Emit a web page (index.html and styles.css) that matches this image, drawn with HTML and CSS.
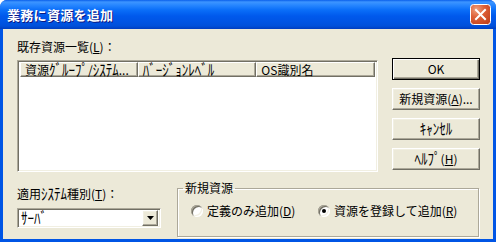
FILE: index.html
```html
<!DOCTYPE html>
<html lang="ja">
<head>
	<meta charset="UTF-8">
	<title>業務に資源を追加</title>
	<link rel="stylesheet" href="styles.css">
</head>
<body>
	<div class="window">
		<div class="titlebar">
			<span class="title">業務に資源を追加</span>
			<span class="close">
				<svg width="21" height="21" viewBox="0 0 21 21">
					<defs>
						<radialGradient id="closeFill" cx="0.3" cy="0.25" r="0.9">
							<stop offset="0" stop-color="#F0A07E"/>
							<stop offset="0.45" stop-color="#DD5F36"/>
							<stop offset="1" stop-color="#C1401C"/>
						</radialGradient>
					</defs>
					<rect x="0.5" y="0.5" width="20" height="20" rx="3" fill="url(#closeFill)" stroke="#fff"/>
					<path d="M6 6 L15 15 M15 6 L6 15" stroke="#fff" stroke-width="2" stroke-linecap="square"/>
				</svg>
			</span>
		</div>
		<div class="content">
			<div class="top">
				<div class="left">
					<div class="label">既存資源一覧(<u>L</u>)：</div>
					<div class="listview sunken">
						<div class="header">
							<div class="col">資源<span class="hw">ｸﾞﾙｰﾌﾟ</span>/<span class="hw">ｼｽﾃﾑ</span>...</div>
							<div class="col"><span class="hw">ﾊﾞｰｼﾞｮﾝﾚﾍﾞﾙ</span></div>
							<div class="col">OS識別名</div>
						</div>
					</div>
				</div>
				<div class="buttons">
					<div class="btn default">OK</div>
					<div class="btn raised">新規資源(<u>A</u>)...</div>
					<div class="btn raised"><span class="hw">ｷｬﾝｾﾙ</span></div>
					<div class="btn raised"><span class="hw">ﾍﾙﾌﾟ</span>(<u>H</u>)</div>
				</div>
			</div>
			<div class="bottom">
				<div class="systype">
					<div class="label">適用<span class="hw">ｼｽﾃﾑ</span>種別(<u>T</u>)：</div>
					<div class="combo sunken">
						<span class="value"><span class="hw">ｻｰﾊﾞ</span></span>
						<span class="drop raised">
							<svg width="7" height="4" viewBox="0 0 7 4"><polygon points="0,0 7,0 3.5,4" fill="#000"/></svg>
						</span>
					</div>
				</div>
				<fieldset class="group">
					<legend>新規資源</legend>
					<div class="radios">
						<div class="option first"><span class="radio"></span>定義のみ追加(<u>D</u>)</div>
						<div class="option"><span class="radio checked"></span>資源を登録して追加(<u>R</u>)</div>
					</div>
				</fieldset>
			</div>
		</div>
	</div>
</body>
</html>
```
FILE: styles.css
```css
body { margin: 0; background: #fff; font: 12px/14px "Noto Sans CJK JP", sans-serif; color: #000; }
u { text-decoration: underline; text-underline-offset: 1px; }
.hw { display: inline-block; font-size: 13px; line-height: 12px; transform: scaleY(1.2); }

.window { width: 496px; height: 242px; background: #0055E5; border-radius: 7px 7px 0 0; display: flex; flex-direction: column; overflow: hidden; }
.titlebar { height: 29px; flex: none; display: flex; align-items: center; justify-content: space-between; padding: 0 5px 0 7px;
	background: linear-gradient(#0A5FEA 0, #3D95FF 2px, #2887FF 5px, #0A6EF8 10px, #0059EC 16px, #0054E3 22px, #0050DA 26px, #003DBF 29px); }
.title { color: #fff; font-weight: bold; font-size: 13px; text-shadow: 1px 1px #0A1883; letter-spacing: 0.3px; }
.close { display: flex; }

.content { flex: 1; margin: 0 3px 3px; background: #ECE9D8; padding: 11px 13px 0 14px; display: flex; flex-direction: column; }

.sunken { border: 1px solid; border-color: #ACA899 #fff #fff #ACA899; box-shadow: inset 1px 1px #716F64, inset -1px -1px #F1EFE2; box-sizing: border-box; }
.raised { border: 1px solid; border-color: #fff #716F64 #716F64 #fff; box-shadow: inset -1px -1px #ACA899, inset 1px 1px #F1EFE2; box-sizing: border-box; }

.top { display: flex; gap: 14px; }
.label { height: 14px; }
.listview { width: 361px; height: 112px; margin-top: 6px; background: #fff; padding: 1px 2px 2px 2px; }
.header { display: flex; height: 15px; }
.col { width: 119px; height: 15px; box-sizing: border-box; padding-left: 4px; line-height: 13px; white-space: nowrap;
	border: 1px solid; border-color: #fff #716F64 #716F64 #fff; box-shadow: inset -1px -1px #ACA899; background: #ECE9D8; }
.col:first-child { width: 118px; }

.buttons { display: flex; flex-direction: column; gap: 8px; margin-top: 18px; }
.btn { width: 88px; height: 22px; display: flex; align-items: center; justify-content: center; background: #ECE9D8; }
.btn.default { border: 1px solid #000; box-sizing: border-box; box-shadow: inset 1px 1px #fff, inset -1px -1px #716F64, inset -2px -2px #ACA899; }

.bottom { display: flex; margin-top: 9px; }
.systype { padding-top: 6px; }
.combo { width: 144px; height: 20px; margin-top: 7px; background: #fff; display: flex; align-items: center; padding: 2px; }
.combo .value { padding-left: 1px; flex: 1; }
.drop { width: 16px; height: 16px; background: #ECE9D8; display: flex; align-items: center; justify-content: center; }

.group { margin: 0 0 0 16px; padding: 0 5px 0 5px; width: 302px; height: 56px; box-sizing: border-box;
	border: 1px solid #ACA899; box-shadow: inset 1px 1px #fff, 1px 1px #fff; }
.group legend { padding: 0 2px; line-height: 14px; }
.radios { display: flex; align-items: center; margin-top: 9px; padding-left: 8px; }
.option { display: flex; align-items: center; height: 14px; }
.option.first { width: 127px; }
.radio { width: 12px; height: 12px; border-radius: 50%; background: #fff; margin-right: 4px; position: relative;
	box-shadow: inset 1px 1px #ACA899, inset -1px -1px #fff, inset 2px 2px #716F64, inset -2px -2px #F1EFE2; }
.radio.checked::after { content: ""; position: absolute; left: 4px; top: 4px; width: 4px; height: 4px; border-radius: 50%; background: #000; }
```
